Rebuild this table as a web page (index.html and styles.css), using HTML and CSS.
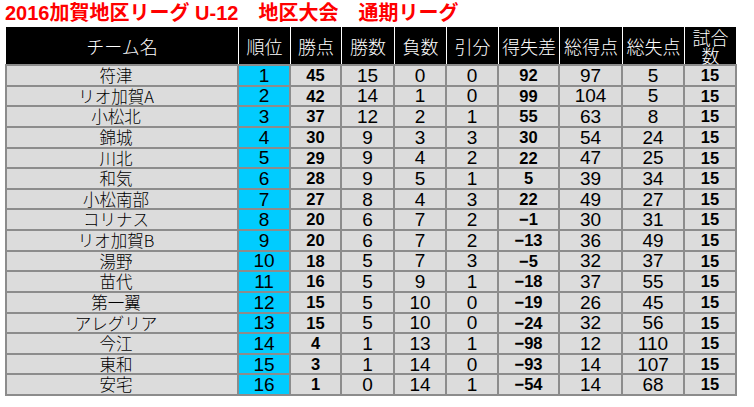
FILE: index.html
```html
<!DOCTYPE html>
<html lang="ja">
<head>
<meta charset="utf-8">
<title>2016加賀地区リーグ U-12 地区大会 通期リーグ</title>
<link rel="stylesheet" href="styles.css">
</head>
<body>
<main class="page">
  <h1 class="title">2016加賀地区リーグ U-12　地区大会　通期リーグ</h1>
  <div class="standings" role="table">
    <div class="head" role="row">
      <div class="head-cell" role="columnheader">チーム名</div>
      <div class="head-cell" role="columnheader">順位</div>
      <div class="head-cell" role="columnheader">勝点</div>
      <div class="head-cell" role="columnheader">勝数</div>
      <div class="head-cell" role="columnheader">負数</div>
      <div class="head-cell" role="columnheader">引分</div>
      <div class="head-cell" role="columnheader">得失差</div>
      <div class="head-cell" role="columnheader">総得点</div>
      <div class="head-cell" role="columnheader">総失点</div>
      <div class="head-cell" role="columnheader">試合数</div>
    </div>
    <div class="body">
      <div class="row" role="row"><div class="cell name">符津</div><div class="cell num rank">1</div><div class="cell strong">45</div><div class="cell num">15</div><div class="cell num">0</div><div class="cell num">0</div><div class="cell strong">92</div><div class="cell num">97</div><div class="cell num">5</div><div class="cell strong">15</div></div>
      <div class="row" role="row"><div class="cell name">リオ加賀A</div><div class="cell num rank">2</div><div class="cell strong">42</div><div class="cell num">14</div><div class="cell num">1</div><div class="cell num">0</div><div class="cell strong">99</div><div class="cell num">104</div><div class="cell num">5</div><div class="cell strong">15</div></div>
      <div class="row" role="row"><div class="cell name">小松北</div><div class="cell num rank">3</div><div class="cell strong">37</div><div class="cell num">12</div><div class="cell num">2</div><div class="cell num">1</div><div class="cell strong">55</div><div class="cell num">63</div><div class="cell num">8</div><div class="cell strong">15</div></div>
      <div class="row" role="row"><div class="cell name">錦城</div><div class="cell num rank">4</div><div class="cell strong">30</div><div class="cell num">9</div><div class="cell num">3</div><div class="cell num">3</div><div class="cell strong">30</div><div class="cell num">54</div><div class="cell num">24</div><div class="cell strong">15</div></div>
      <div class="row" role="row"><div class="cell name">川北</div><div class="cell num rank">5</div><div class="cell strong">29</div><div class="cell num">9</div><div class="cell num">4</div><div class="cell num">2</div><div class="cell strong">22</div><div class="cell num">47</div><div class="cell num">25</div><div class="cell strong">15</div></div>
      <div class="row" role="row"><div class="cell name">和気</div><div class="cell num rank">6</div><div class="cell strong">28</div><div class="cell num">9</div><div class="cell num">5</div><div class="cell num">1</div><div class="cell strong">5</div><div class="cell num">39</div><div class="cell num">34</div><div class="cell strong">15</div></div>
      <div class="row" role="row"><div class="cell name">小松南部</div><div class="cell num rank">7</div><div class="cell strong">27</div><div class="cell num">8</div><div class="cell num">4</div><div class="cell num">3</div><div class="cell strong">22</div><div class="cell num">49</div><div class="cell num">27</div><div class="cell strong">15</div></div>
      <div class="row" role="row"><div class="cell name">コリナス</div><div class="cell num rank">8</div><div class="cell strong">20</div><div class="cell num">6</div><div class="cell num">7</div><div class="cell num">2</div><div class="cell strong">−1</div><div class="cell num">30</div><div class="cell num">31</div><div class="cell strong">15</div></div>
      <div class="row" role="row"><div class="cell name">リオ加賀B</div><div class="cell num rank">9</div><div class="cell strong">20</div><div class="cell num">6</div><div class="cell num">7</div><div class="cell num">2</div><div class="cell strong">−13</div><div class="cell num">36</div><div class="cell num">49</div><div class="cell strong">15</div></div>
      <div class="row" role="row"><div class="cell name">湯野</div><div class="cell num rank">10</div><div class="cell strong">18</div><div class="cell num">5</div><div class="cell num">7</div><div class="cell num">3</div><div class="cell strong">−5</div><div class="cell num">32</div><div class="cell num">37</div><div class="cell strong">15</div></div>
      <div class="row" role="row"><div class="cell name">苗代</div><div class="cell num rank">11</div><div class="cell strong">16</div><div class="cell num">5</div><div class="cell num">9</div><div class="cell num">1</div><div class="cell strong">−18</div><div class="cell num">37</div><div class="cell num">55</div><div class="cell strong">15</div></div>
      <div class="row" role="row"><div class="cell name">第一翼</div><div class="cell num rank">12</div><div class="cell strong">15</div><div class="cell num">5</div><div class="cell num">10</div><div class="cell num">0</div><div class="cell strong">−19</div><div class="cell num">26</div><div class="cell num">45</div><div class="cell strong">15</div></div>
      <div class="row" role="row"><div class="cell name">アレグリア</div><div class="cell num rank">13</div><div class="cell strong">15</div><div class="cell num">5</div><div class="cell num">10</div><div class="cell num">0</div><div class="cell strong">−24</div><div class="cell num">32</div><div class="cell num">56</div><div class="cell strong">15</div></div>
      <div class="row" role="row"><div class="cell name">今江</div><div class="cell num rank">14</div><div class="cell strong">4</div><div class="cell num">1</div><div class="cell num">13</div><div class="cell num">1</div><div class="cell strong">−98</div><div class="cell num">12</div><div class="cell num">110</div><div class="cell strong">15</div></div>
      <div class="row" role="row"><div class="cell name">東和</div><div class="cell num rank">15</div><div class="cell strong">3</div><div class="cell num">1</div><div class="cell num">14</div><div class="cell num">0</div><div class="cell strong">−93</div><div class="cell num">14</div><div class="cell num">107</div><div class="cell strong">15</div></div>
      <div class="row" role="row"><div class="cell name">安宅</div><div class="cell num rank">16</div><div class="cell strong">1</div><div class="cell num">0</div><div class="cell num">14</div><div class="cell num">1</div><div class="cell strong">−54</div><div class="cell num">14</div><div class="cell num">68</div><div class="cell strong">15</div></div>
    </div>
  </div>
</main>
</body>
</html>
```

FILE: styles.css
```css
* {
  box-sizing: border-box;
}

html,
body {
  margin: 0;
  background: #ffffff;
}

body {
  font-family: "Liberation Sans", "Noto Sans CJK JP", sans-serif;
  color: #000000;
}

.page {
  padding-left: 5px;
}

.title {
  margin: 0;
  height: 27px;
  font-family: "Liberation Sans", "Noto Sans CJK JP", sans-serif;
  font-size: 20px;
  line-height: 27px;
  font-weight: 700;
  color: #ff0000;
  white-space: nowrap;
}

.standings {
  width: 732px;
}

.head {
  display: grid;
  grid-template-columns: 232px 51px 50px 52px 51px 51px 60px 62px 61px 51px;
  column-gap: 1px;
  height: 37px;
  margin-left: 1px;
  background: #ffffff;
}

.head-cell {
  display: flex;
  align-items: center;
  justify-content: center;
  text-align: center;
  background: #000000;
  color: #ffffff;
  font-family: "Noto Sans CJK JP", sans-serif;
  font-weight: 300;
  font-size: 18px;
  line-height: 18px;
}

.body {
  display: grid;
  grid-template-columns: 230px 50px 49px 51px 50px 50px 59px 61px 60px 50px;
  grid-auto-rows: 18.625px;
  gap: 2px;
  padding: 2px;
  background: #8c8c8c;
}

.row {
  display: contents;
}

.cell {
  display: flex;
  align-items: center;
  justify-content: center;
  background: #dcdcdc;
  line-height: 1;
  white-space: nowrap;
}

.name {
  padding-right: 12px;
  font-family: "Noto Sans CJK JP", sans-serif;
  font-weight: 300;
  font-size: 16.5px;
}

.num {
  font-family: "Liberation Sans Narrow", "Liberation Sans", sans-serif;
  font-size: 19px;
  font-weight: 400;
}

.rank {
  background: #00ccff;
}

.strong {
  font-family: "Liberation Sans", sans-serif;
  font-size: 16.5px;
  font-weight: 700;
}
```
